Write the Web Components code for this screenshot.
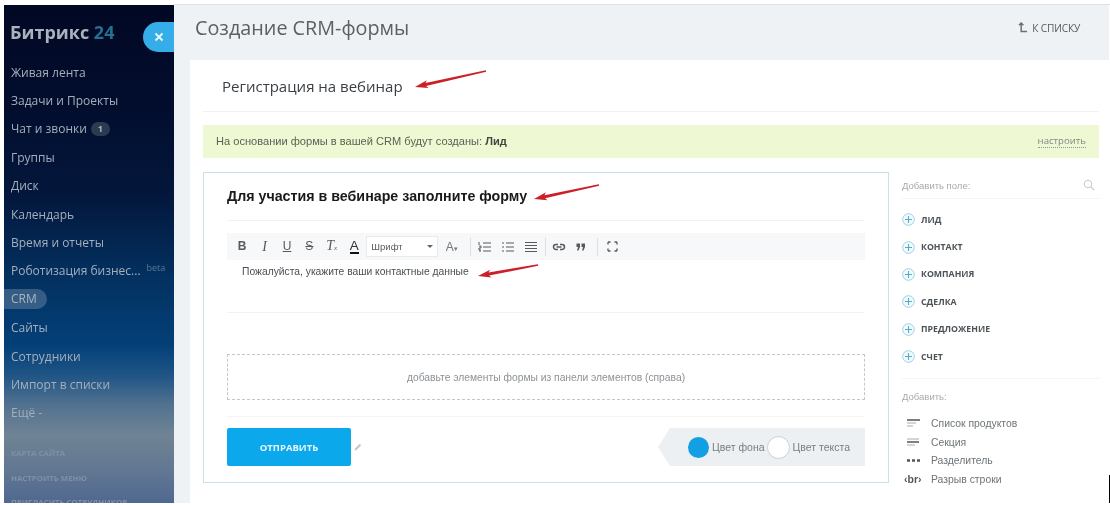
<!DOCTYPE html>
<html lang="ru">
<head>
<meta charset="utf-8">
<title>Создание CRM-формы</title>
<style>
html,body{margin:0;padding:0;background:#fff;}
body{width:1110px;height:505px;overflow:hidden;font-family:"Open Sans",sans-serif;}
</style>
</head>
<body>
<crm-app>
  <crm-sidebar slot="side">
    <nav-item>Живая лента</nav-item>
    <nav-item>Задачи и Проекты</nav-item>
    <nav-item count="1">Чат и звонки</nav-item>
    <nav-item>Группы</nav-item>
    <nav-item>Диск</nav-item>
    <nav-item>Календарь</nav-item>
    <nav-item>Время и отчеты</nav-item>
    <nav-item beta>Роботизация бизнес...</nav-item>
    <nav-item active>CRM</nav-item>
    <nav-item>Сайты</nav-item>
    <nav-item>Сотрудники</nav-item>
    <nav-item>Импорт в списки</nav-item>
    <nav-item>Ещё -</nav-item>
    <nav-link slot="foot">КАРТА САЙТА</nav-link>
    <nav-link slot="foot">НАСТРОИТЬ МЕНЮ</nav-link>
    <nav-link slot="foot">ПРИГЛАСИТЬ СОТРУДНИКОВ</nav-link>
  </crm-sidebar>
  <page-head slot="head">Создание CRM-формы</page-head>
  <form-name>Регистрация на вебинар</form-name>
  <crm-banner>На основании формы в вашей CRM будут созданы: <b>Лид</b></crm-banner>
  <div style="display:flex;gap:13px">
    <form-card></form-card>
    <field-panel></field-panel>
  </div>
</crm-app>
<script>
class CrmApp extends HTMLElement{
  constructor(){
    super();
    this.attachShadow({mode:'open'});
    this.shadowRoot.innerHTML=`
    <style>
    :host{display:block;width:1110px;height:505px;position:relative;overflow:hidden;background:#fff;filter:blur(.35px);}
    .wrap{display:flex;height:498px;padding:5px 0 0 4px;}
    .right{width:935px;background:#eef2f4;margin-right:1px;display:flex;flex-direction:column;}
    .body{flex:1;margin-left:16px;background:#fff;padding:0 10px 0 13px;}
    .end{position:absolute;left:1109px;top:475px;width:1px;height:28px;background:#000;}
    .top{position:absolute;left:174px;top:4px;width:936px;height:1px;background:#dfe2e4;}
    </style>
    <div class="wrap">
      <slot name="side"></slot>
      <div class="right">
        <slot name="head"></slot>
        <div class="body"><slot></slot></div>
      </div>
    </div>
    <div class="top"></div>
    <div class="end"></div>
    <red-arrow x1="486" y1="71" x2="415" y2="87"></red-arrow>
    <red-arrow x1="599" y1="185" x2="534" y2="199"></red-arrow>
    <red-arrow x1="538" y1="265" x2="478" y2="276"></red-arrow>`;
  }
}

class CrmSidebar extends HTMLElement{
  constructor(){
    super();
    this.attachShadow({mode:'open'});
    this.shadowRoot.innerHTML=`
    <style>
    :host{display:block;width:170px;height:498px;position:relative;overflow:hidden;flex:none;
      background:linear-gradient(180deg,#010824 0,#020c2c 90px,#03173c 190px,#03305f 270px,#034078 340px,#1f5485 370px,#527290 400px,#6f8394 430px,#627792 465px,#4f6890 498px);}
    .logo{font:700 18px/26px "Open Sans",sans-serif;color:#aab2bc;padding:14px 0 0 6px;height:26px;}
    .logo span{color:#24708f;}
    .close{position:absolute;right:0;top:17px;width:31px;height:30px;background:#35ade8;border-radius:15px 0 0 15px;display:flex;align-items:center;justify-content:center;}
    nav{margin-top:13px;}
    .foot{margin-top:20px;display:flex;flex-direction:column;gap:11.5px;}
    </style>
    <div class="logo">Битрикс <span>24</span></div>
    <div class="close"><svg width="10" height="10" viewBox="0 0 10 10"><path d="M1.5 1.5l7 7M8.5 1.5l-7 7" stroke="#e6f6ff" stroke-width="2"/></svg></div>
    <nav><slot></slot></nav>
    <div class="foot"><slot name="foot"></slot></div>`;
  }
}

class NavItem extends HTMLElement{
  constructor(){
    super();
    this.attachShadow({mode:'open'});
    const count=this.getAttribute('count');
    this.shadowRoot.innerHTML=`
    <style>
    :host{display:flex;align-items:center;height:28.4px;padding-left:7px;font:400 12px "Open Sans",sans-serif;color:#a4afbb;white-space:nowrap;}
    .t{position:relative;}
    :host([active]) .t{margin-left:-7px;padding:0 10px 0 7px;height:20px;line-height:20px;background:rgba(255,255,255,.2);border-radius:0 10px 10px 0;color:#aab4bf;}
    .n{margin-left:4px;width:19px;height:14px;border-radius:7px;background:#2a3a50;color:#aab4bf;font-size:9px;font-weight:700;line-height:14px;text-align:center;}
    .b{margin-left:6px;font-size:9px;color:#5d7895;position:relative;top:-3px;}
    </style>
    <span class="t"><slot></slot></span>
    ${count?`<span class="n">${count}</span>`:''}
    ${this.hasAttribute('beta')?'<span class="b">beta</span>':''}`;
  }
}

class NavLink extends HTMLElement{
  constructor(){
    super();
    this.attachShadow({mode:'open'});
    this.shadowRoot.innerHTML=`
    <style>
    :host{display:block;height:13px;padding-left:7px;font:700 7.8px/13px "Open Sans",sans-serif;color:#7f90a2;white-space:nowrap;}
    </style><slot></slot>`;
  }
}

class PageHead extends HTMLElement{
  constructor(){
    super();
    this.attachShadow({mode:'open'});
    this.shadowRoot.innerHTML=`
    <style>
    :host{display:flex;align-items:center;justify-content:space-between;height:55px;padding:0 29px 10px 21px;box-sizing:border-box;flex:none;}
    .h{font:400 19.8px "Open Sans",sans-serif;color:#5a6066;}
    .l{display:flex;align-items:center;gap:4px;font:400 10.2px "Open Sans",sans-serif;color:#555b60;letter-spacing:-.2px;}
    </style>
    <span class="h"><slot></slot></span>
    <span class="l"><svg width="10" height="11" viewBox="0 0 10 11"><path d="M1 3.2L3.2 1l2.2 2.2M3.2 1v8.5H9" fill="none" stroke="#6a7075" stroke-width="1.5"/></svg>К СПИСКУ</span>`;
  }
}

class FormName extends HTMLElement{
  constructor(){
    super();
    this.attachShadow({mode:'open'});
    this.shadowRoot.innerHTML=`
    <style>
    :host{display:block;height:51px;padding-left:19px;border-bottom:1px solid #f0f2f3;font:400 15px/52px "Open Sans",sans-serif;color:#3a3f44;}
    </style><slot></slot>`;
  }
}

class CrmBanner extends HTMLElement{
  constructor(){
    super();
    this.attachShadow({mode:'open'});
    this.shadowRoot.innerHTML=`
    <style>
    :host{display:flex;align-items:center;justify-content:space-between;margin:13px 0 14px;height:33px;width:896px;padding:0 13px 1px;box-sizing:border-box;background:#eef8d3;font:400 11.08px "Liberation Sans",sans-serif;color:#5b6256;}
    a{font:400 9.6px "Open Sans",sans-serif;color:#7d8a80;border-bottom:1px dotted #8a9a90;line-height:12px;}
    ::slotted(b){color:#40463e;}
    </style>
    <span><slot></slot></span><a>настроить</a>`;
  }
}

class FormCard extends HTMLElement{
  constructor(){
    super();
    this.attachShadow({mode:'open'});
    this.shadowRoot.innerHTML=`
    <style>
    :host{display:block;width:686px;height:311px;box-sizing:border-box;border:1px solid #c6e3ea;padding:0 23px;flex:none;font-family:"Liberation Sans",sans-serif;}
    .title{height:47px;line-height:47px;font-weight:700;font-size:14.25px;color:#17191b;border-bottom:1px solid #f1f3f4;white-space:nowrap;}
    .text{height:53px;padding:5px 0 0 15px;box-sizing:border-box;font-size:10.3px;line-height:14px;color:#4a4f53;border-bottom:1px solid #f1f3f4;}
    .drop{margin-top:41px;height:46px;box-sizing:border-box;border:1px dashed #c4c8cb;display:flex;align-items:center;justify-content:center;font-size:10.3px;color:#8d9296;}
    hr{border:0;border-top:1px solid #f6f3f0;margin:16px 0 11px;}
    .foot{display:flex;align-items:center;}
    .btn{width:124px;height:38px;border-radius:2px;background:#0ca8ec;color:#e8f7ff;display:flex;align-items:center;justify-content:center;font:700 9.5px "Open Sans",sans-serif;}
    .pen{margin-left:2px;}
    .col{margin-left:auto;}
    </style>
    <div class="title">Для участия в вебинаре заполните форму</div>
    <editor-bar></editor-bar>
    <div class="text">Пожалуйста, укажите ваши контактные данные</div>
    <div class="drop">добавьте элементы формы из панели элементов (справа)</div>
    <hr>
    <div class="foot">
      <div class="btn">ОТПРАВИТЬ</div>
      <svg class="pen" width="10" height="10" viewBox="0 0 10 10"><path d="M1.5 8.5l.6-2L6.8 1.8l1.4 1.4-4.7 4.7z" fill="#c3c7ca"/></svg>
      <color-strip class="col"></color-strip>
    </div>`;
  }
}

class EditorBar extends HTMLElement{
  constructor(){
    super();
    this.attachShadow({mode:'open'});
    const g='#555b60';
    const lines=(d)=>`<svg width="14" height="12" viewBox="0 0 14 12"><path d="${d}" fill="none" stroke="${g}" stroke-width="1"/></svg>`;
    this.shadowRoot.innerHTML=`
    <style>
    :host{display:flex;align-items:center;height:27px;margin-top:12px;padding-left:4px;background:#f7f8f9;font-family:"Liberation Sans",sans-serif;color:#555b60;}
    .b{width:22.4px;flex:none;text-align:center;font-size:12px;line-height:27px;display:flex;align-items:center;justify-content:center;}
    .sel{width:72px;height:21px;box-sizing:border-box;margin-left:1px;background:#fff;border:1px solid #e8eaeb;display:flex;align-items:center;justify-content:space-between;padding:0 4px;font-size:9.5px;flex:none;}
    .sel i{border:3px solid transparent;border-top-color:#666;border-bottom:0;}
    .sep{width:1px;height:18px;background:#dcdfe1;flex:none;margin:0 3px;}
    .a{width:25px;text-align:center;font-size:12px;flex:none;color:#777;}
    .a small{font-size:7px;}
    .bar{display:block;border-bottom:2px solid #111;line-height:12px;color:#333;font-size:13.5px;}
    .s{font-family:"Liberation Serif",serif;font-size:14px;}
    </style>
    <span class="b"><b>B</b></span>
    <span class="b"><i class="s">I</i></span>
    <span class="b"><u>U</u></span>
    <span class="b"><s>S</s></span>
    <span class="b"><i class="s"><u style="text-decoration:none">T</u><small style="font-size:7px">x</small></i></span>
    <span class="b"><span class="bar">A</span></span>
    <span class="sel">Шрифт<i></i></span>
    <span class="a" style="margin-left:1px">A<small>▾</small></span>
    <span class="sep" style="margin-left:6px"></span>
    <span class="b" style="margin-left:-1px">${lines('M5 2h8M5 6h8M5 10h8M1 1v3M1 5h2v2H1v2h2M1 10h2')}</span>
    <span class="b" style="margin-left:1px">${lines('M5 2h8M5 6h8M5 10h8M1 2h2M1 6h2M1 10h2')}</span>
    <span class="b" style="margin-left:1px">${lines('M1 1.5h12M1 4.5h12M1 7.5h12M1 10.5h12')}</span>
    <span class="sep" style="margin:0 0 0 2px"></span>
    <span class="b" style="margin-left:2px"><svg width="14" height="8" viewBox="0 0 14 8"><path d="M6 1.5H4a2.5 2.5 0 0 0 0 5h2M8 1.5h2a2.5 2.5 0 0 1 0 5H8M4.5 4h5" fill="none" stroke="${g}" stroke-width="1.5"/></svg></span>
    <span class="b"><svg width="10" height="8" viewBox="0 0 10 8"><path d="M0.5 0.5h3.5v3.5L2.5 7.5H1L2 4H0.5zM5.5 0.5H9v3.5L7.5 7.5H6L7 4H5.5z" fill="${g}"/></svg></span>
    <span class="sep" style="margin:0 0 0 5px"></span>
    <span class="b" style="margin-left:3px"><svg width="11" height="11" viewBox="0 0 11 11"><path d="M1 3.5V1h2.5M7.5 1H10v2.5M10 7.5V10H7.5M3.5 10H1V7.5" fill="none" stroke="${g}" stroke-width="1.3" stroke-dasharray="2.5 0"/></svg></span>`;
  }
}

class ColorStrip extends HTMLElement{
  constructor(){
    super();
    this.attachShadow({mode:'open'});
    this.shadowRoot.innerHTML=`
    <style>
    :host{display:flex;align-items:center;width:207px;height:38px;box-sizing:border-box;padding-left:30px;background:#edf0f3;clip-path:polygon(12px 0,100% 0,100% 100%,12px 100%,0 50%);font:400 10.5px "Liberation Sans",sans-serif;color:#777d82;white-space:nowrap;}
    i{display:block;width:21px;height:21px;border-radius:50%;flex:none;}
    .a{background:#139fe3;margin-right:3px;}
    .b{background:#fff;border:1px solid #c9d0d4;box-sizing:border-box;width:23px;height:23px;margin:0 3px 0 2px;}
    </style>
    <i class="a"></i>Цвет фона<i class="b"></i>Цвет текста`;
  }
}

class FieldPanel extends HTMLElement{
  constructor(){
    super();
    this.attachShadow({mode:'open'});
    this.shadowRoot.innerHTML=`
    <style>
    :host{display:block;width:198px;flex:none;font-family:"Liberation Sans",sans-serif;}
    .cap{display:flex;justify-content:space-between;align-items:center;font-size:9.5px;color:#a6abaf;height:26px;border-bottom:1px solid #f3f5f6;}
    .cap svg{margin-right:5px;}
    .list{padding:7px 0 0;height:180px;box-sizing:border-box;border-bottom:1px solid #f3f5f6;}
    .lbl{font-size:9.5px;color:#a6abaf;padding-top:11px;height:26px;line-height:13px;box-sizing:border-box;}
    .rows{padding-top:9px;}
    </style>
    <div class="cap">Добавить поле:<svg width="12" height="12" viewBox="0 0 12 12"><circle cx="5" cy="5" r="3.8" fill="none" stroke="#c5c9cc"/><path d="M8 8l3.2 3.2" stroke="#c5c9cc" stroke-width="1.2"/></svg></div>
    <div class="list">
      <field-add>ЛИД</field-add>
      <field-add>КОНТАКТ</field-add>
      <field-add>КОМПАНИЯ</field-add>
      <field-add>СДЕЛКА</field-add>
      <field-add>ПРЕДЛОЖЕНИЕ</field-add>
      <field-add>СЧЕТ</field-add>
    </div>
    <div class="lbl">Добавить:</div>
    <div class="rows">
      <field-extra kind="list">Список продуктов</field-extra>
      <field-extra kind="section">Секция</field-extra>
      <field-extra kind="sep">Разделитель</field-extra>
      <field-extra kind="br">Разрыв строки</field-extra>
    </div>`;
  }
}

class FieldAdd extends HTMLElement{
  constructor(){
    super();
    this.attachShadow({mode:'open'});
    this.shadowRoot.innerHTML=`
    <style>
    :host{display:flex;align-items:center;gap:6px;height:27.4px;font:700 8.75px "Open Sans",sans-serif;color:#4d5357;}
    </style>
    <svg width="13" height="13" viewBox="0 0 13 13"><circle cx="6.5" cy="6.5" r="5.8" fill="#f2fafc" stroke="#9ad3e2"/><path d="M6.5 3v7M3 6.5h7" stroke="#4fb0cb" stroke-width="1.1"/></svg>
    <slot></slot>`;
  }
}

class FieldExtra extends HTMLElement{
  constructor(){
    super();
    this.attachShadow({mode:'open'});
    const icons={
      list:'<svg width="13" height="8" viewBox="0 0 13 8"><path d="M0 1h13" stroke="#555" stroke-width="1.5"/><path d="M0 4h9M0 7h6" stroke="#aaa"/></svg>',
      section:'<svg width="13" height="8" viewBox="0 0 13 8"><path d="M0 1h12" stroke="#aaa"/><path d="M0 4h12" stroke="#555" stroke-width="1.5"/><path d="M0 7h8" stroke="#aaa"/></svg>',
      sep:'<svg width="13" height="3" viewBox="0 0 13 3"><path d="M0 1.5h3M5 1.5h3M10 1.5h3" stroke="#555" stroke-width="2.4"/></svg>',
      br:'<span class="br">‹br›</span>'
    };
    this.shadowRoot.innerHTML=`
    <style>
    :host{display:flex;align-items:center;height:18.7px;font:400 10.4px "Liberation Sans",sans-serif;color:#6e7478;}
    .i{width:29px;padding-left:5px;box-sizing:border-box;flex:none;display:flex;align-items:center;}
    .br{font-size:10.5px;font-weight:700;color:#555;margin-left:-3px;}
    </style>
    <span class="i">${icons[this.getAttribute('kind')]}</span><slot></slot>`;
  }
}

class RedArrow extends HTMLElement{
  constructor(){
    super();
    this.attachShadow({mode:'open'});
    const x1=+this.getAttribute('x1'),y1=+this.getAttribute('y1'),x2=+this.getAttribute('x2'),y2=+this.getAttribute('y2');
    const len=Math.hypot(x2-x1,y2-y1),deg=Math.atan2(y2-y1,x2-x1)*180/Math.PI;
    // tapered tail, head at the far end
    this.shadowRoot.innerHTML=`
    <style>:host{position:absolute;left:0;top:0;pointer-events:none;}svg{display:block;overflow:visible;width:1px;height:1px;}</style>
    <svg viewBox="0 0 1 1"><polygon transform="translate(${x1} ${y1}) rotate(${deg})" fill="#cc2029"
      points="0,-0.8 ${len-11},-1.5 ${len-13},-4 ${len},0 ${len-13},4 ${len-11},1.5 0,0.8"/></svg>`;
  }
}

customElements.define('crm-app',CrmApp);
customElements.define('crm-sidebar',CrmSidebar);
customElements.define('nav-item',NavItem);
customElements.define('nav-link',NavLink);
customElements.define('page-head',PageHead);
customElements.define('form-name',FormName);
customElements.define('crm-banner',CrmBanner);
customElements.define('form-card',FormCard);
customElements.define('editor-bar',EditorBar);
customElements.define('color-strip',ColorStrip);
customElements.define('field-panel',FieldPanel);
customElements.define('field-add',FieldAdd);
customElements.define('field-extra',FieldExtra);
customElements.define('red-arrow',RedArrow);
</script>
</body>
</html>
